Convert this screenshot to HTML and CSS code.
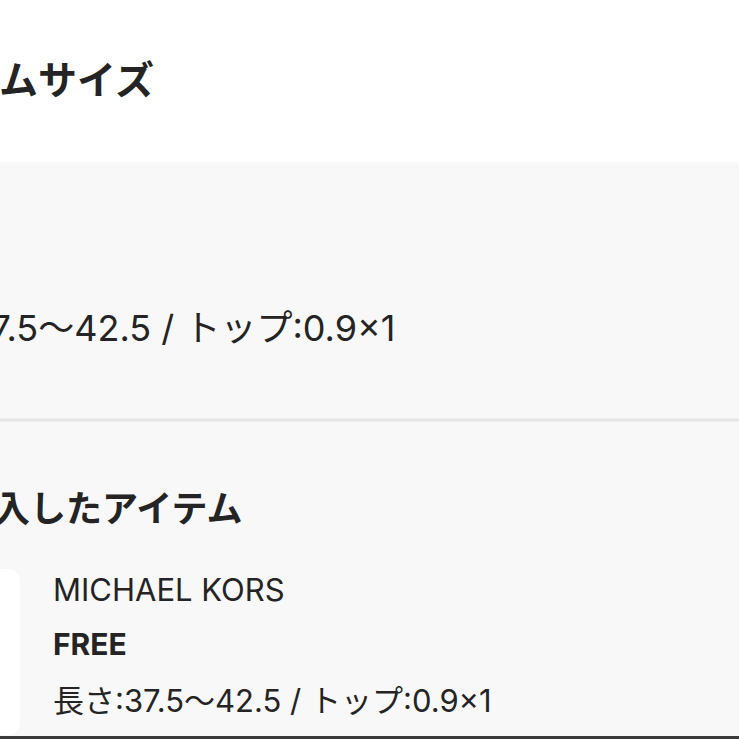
FILE: index.html
```html
<!DOCTYPE html>
<html lang="ja">
<head>
<meta charset="utf-8">
<link rel="stylesheet" href="styles.css">
</head>
<body>
<div class="viewport">
  <header class="header">
    <h1 class="title">アイテムサイズ</h1>
  </header>
  <section class="size-section">
    <p class="size-line">長さ:37.5～42.5 / トップ:0.9×1</p>
  </section>
  <div class="divider"></div>
  <section class="bought">
    <h2 class="bought-title">最近購入したアイテム</h2>
    <div class="item">
      <div class="thumb"></div>
      <div class="item-info">
        <p class="brand">MICHAEL KORS</p>
        <p class="size">FREE</p>
        <p class="detail">長さ:37.5～42.5 / トップ:0.9×1</p>
      </div>
    </div>
  </section>
  <div class="bottom-bar"></div>
</div>
</body>
</html>
```

FILE: styles.css
```css
html, body {
  margin: 0;
  padding: 0;
}
body {
  width: 739px;
  height: 739px;
  overflow: hidden;
  background: #f8f8f8;
  font-family: "Inter", "Noto Sans CJK JP", sans-serif;
  color: #242424;
}
.viewport {
  width: 739px;
  height: 739px;
  overflow: hidden;
  display: flex;
  flex-direction: column;
}
.header {
  background: #ffffff;
  height: 162px;
  flex: none;
  box-sizing: border-box;
  padding-top: 61px;
  overflow: hidden;
}
.title {
  margin: 0 0 0 -114px;
  font-size: 39px;
  line-height: 38px;
  font-weight: 700;
  white-space: nowrap;
}
.size-section {
  background: #f8f8f8;
  height: 256px;
  flex: none;
  box-sizing: border-box;
  padding-top: 148px;
  overflow: hidden;
}
.size-line {
  margin: 0 0 0 -114px;
  font-size: 36px;
  line-height: 36px;
  white-space: nowrap;
}
.divider {
  height: 4px;
  flex: none;
  background: linear-gradient(#f0f0f0, #e3e3e3 50%, #f1f1f1);
}
.bought {
  background: #f8f8f8;
  flex: 1;
  padding-top: 69px;
  overflow: hidden;
}
.bought-title {
  margin: 0 0 0 -114px;
  font-size: 36px;
  line-height: 36px;
  font-weight: 700;
  white-space: nowrap;
}
.item {
  display: flex;
  margin-top: 42px;
  gap: 33px;
}
.thumb {
  width: 20px;
  height: 166px;
  background: #ffffff;
  border-radius: 0 12px 12px 0;
  flex: none;
}
.item-info {
  display: flex;
  flex-direction: column;
  padding-top: 5px;
}
.brand {
  margin: 0;
  font-size: 31px;
  line-height: 32px;
  white-space: nowrap;
}
.size {
  margin: 23px 0 0;
  font-size: 30px;
  line-height: 30px;
  font-weight: 700;
}
.detail {
  margin: 27px 0 0;
  font-size: 31px;
  line-height: 30px;
  white-space: nowrap;
}
.bottom-bar {
  height: 3px;
  background: #3a3a3a;
  flex: none;
}
```
